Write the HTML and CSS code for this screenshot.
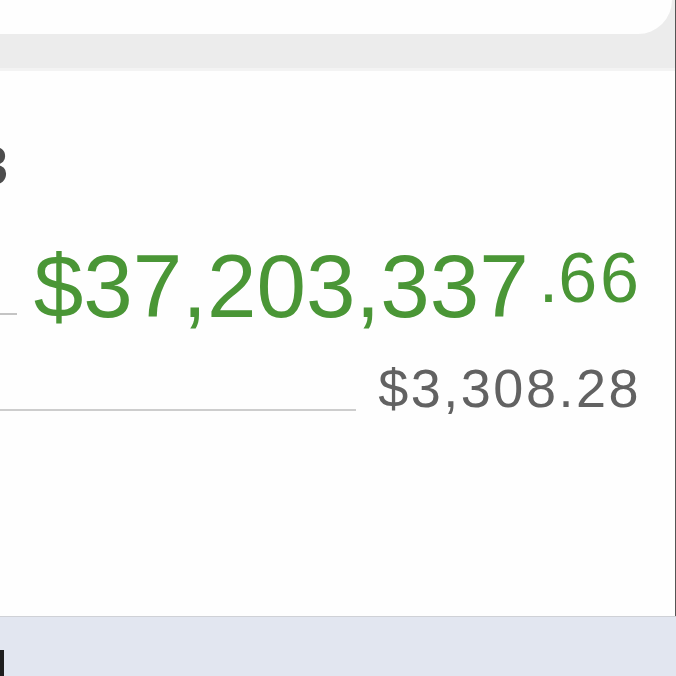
FILE: index.html
```html
<!DOCTYPE html>
<html>
<head>
    <title>Balance</title>
    <meta charset="utf-8">
    <meta name="viewport" content="width=device-width, initial-scale=1">
    <link rel="stylesheet" href="styles.css">
</head>
<body>
    <div class="screen">
        <div class="main">
            <div class="topbar">
                <div class="card"></div>
            </div>
            <div class="divider"></div>
            <div class="content">
                <div class="label">3</div>

                <div class="row">
                    <div class="leader first"></div>
                    <div class="amount">$37,203,337<span class="cents"><span class="dot">.</span>66</span></div>
                </div>

                <div class="row">
                    <div class="leader second"></div>
                    <div class="sub">$3,308.28</div>
                </div>
            </div>
        </div>
        <div class="tabbar">
            <div class="tab-edge"></div>
        </div>
    </div>
</body>
</html>
```

FILE: styles.css
```css
body { margin: 0; font-family: "Liberation Sans", Arial, sans-serif; background: #fefefe; }
.screen { width: 676px; height: 676px; overflow: hidden; display: flex; flex-direction: column; }
.main { flex: 1; display: flex; flex-direction: column; border-right: 1px solid #555; }

.topbar { height: 68px; background: #ececec; }
.card { width: 672px; height: 34px; background: #fefefe; border-bottom-right-radius: 38px; }
.divider { height: 3px; background: #f3f3f3; }

.content { flex: 1; background: #fefefe; overflow: hidden; }
.label { margin: 67px 0 0 -22px; font-size: 54px; font-weight: bold; line-height: 1; color: #4d4d4d; }

.row { display: flex; padding-right: 36px; }
.leader { flex: 1; height: 2px; align-self: flex-end; }
.leader.first { background: #c4c4c4; margin: 0 17px 16px 0; }
.leader.second { background: #cdcdcd; margin: 0 22px 4px 0; }

.amount { margin-top: 50px; font-size: 89px; line-height: 1; color: #4a9636; }
.cents { display: inline-block; vertical-align: top; margin: 1px -3px 0 10px; font-size: 70px; letter-spacing: 3px; line-height: 1; }
.cents .dot { letter-spacing: 0; }
.sub { margin: 30px -2px 0 0; font-size: 54px; line-height: 1; letter-spacing: 2.5px; color: #626262; }

.tabbar { height: 60px; background: #e2e6f0; border-top: 1px solid #cfd1d6; box-sizing: border-box; }
.tab-edge { width: 4px; height: 26px; margin-top: 33px; background: #1e1e1e; }
```
